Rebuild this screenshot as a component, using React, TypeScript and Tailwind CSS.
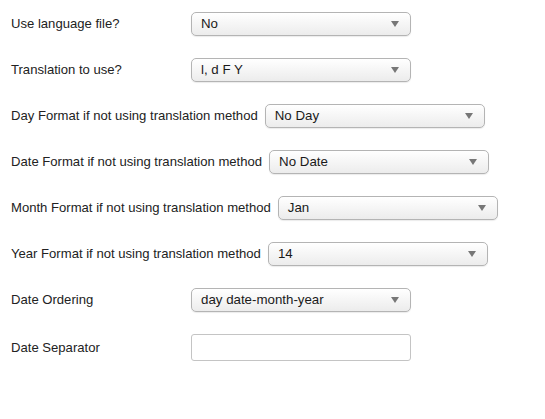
const rows: { label: string; value: string | null }[] = [
  { label: "Use language file?", value: "No" },
  { label: "Translation to use?", value: "l, d F Y" },
  { label: "Day Format if not using translation method", value: "No Day" },
  { label: "Date Format if not using translation method", value: "No Date" },
  { label: "Month Format if not using translation method", value: "Jan" },
  { label: "Year Format if not using translation method", value: "14" },
  { label: "Date Ordering", value: "day date-month-year" },
  { label: "Date Separator", value: null },
];

function Select({ value }: { value: string }) {
  return (
    <div className="flex h-[24px] w-[220px] items-center justify-between rounded-[5px] border border-[#b4b4b4] bg-gradient-to-b from-white to-[#ececec] pl-[9px] pr-[11px] shadow-[0_1px_1px_rgba(0,0,0,0.08)]">
      <span className="text-[13.3px] text-[#1a1a1a]">{value}</span>
      <svg width="8" height="6" viewBox="0 0 8 6">
        <path d="M0 0 L8 0 L4 6 Z" fill="#777" />
      </svg>
    </div>
  );
}

export default function App() {
  return (
    <div
      className="min-h-[419px] bg-white pl-[11px] pt-[12px]"
      style={{ fontFamily: '"Liberation Sans", Arial, sans-serif' }}
    >
      {rows.map((row) => (
        <div key={row.label} className="mb-[22px] flex items-center">
          <label className="mr-[7px] min-w-[173px] text-[13.1px] text-[#222]">
            {row.label}
          </label>
          {row.value !== null ? (
            <Select value={row.value} />
          ) : (
            <input
              type="text"
              className="h-[27px] w-[220px] rounded-[3px] border border-[#c4c4c4] bg-white outline-none"
            />
          )}
        </div>
      ))}
    </div>
  );
}
